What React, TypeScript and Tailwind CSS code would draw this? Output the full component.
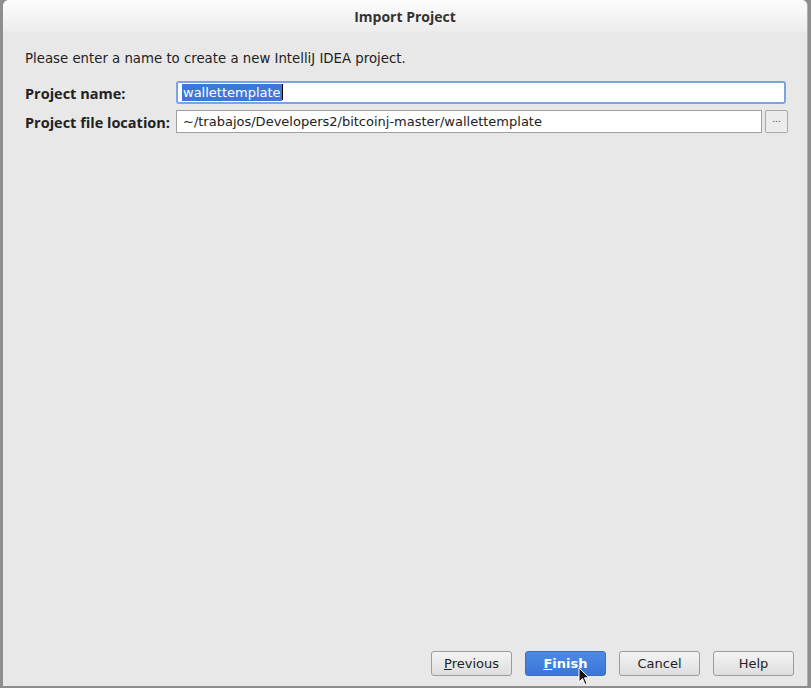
import React from "react";

const font = { fontFamily: '"DejaVu Sans", "Open Sans", sans-serif' };
const bold = { fontFamily: '"Open Sans", "DejaVu Sans", sans-serif' };

const Btn = ({
  children,
  primary,
}: {
  children: React.ReactNode;
  primary?: boolean;
}) => (
  <div
    className={
      primary
        ? "relative w-[81px] h-[25px] rounded-[3px] border border-[#3a6fc0] bg-gradient-to-b from-[#4d8ae6] to-[#3b76d6] text-white font-bold text-[13px] flex items-center justify-center"
        : "relative w-[81px] h-[25px] rounded-[3px] border border-[#9c9c9c] bg-gradient-to-b from-[#f4f4f4] to-[#dedede] text-[#222] text-[13px] flex items-center justify-center"
    }
  >
    {children}
  </div>
);

export default function App() {
  return (
    <div className="w-[811px] h-[688px] bg-[#8e8e8e] flex" style={font}>
      <div className="ml-[3px] w-[805px] h-[686px] bg-[#e8e8e8] rounded-t-[6px] flex flex-col overflow-hidden border-r border-[#b0b0b0]">
        <div
          className="h-[32px] bg-gradient-to-b from-[#fdfdfd] to-[#ececec] flex items-center justify-center text-[14px] font-bold text-[#333]"
          style={bold}
        >
          Import Project
        </div>
        <div className="flex-1 flex flex-col pl-[22px] pr-[13px]">
          <p className="mt-[17px] text-[13.3px] text-[#222]">
            Please enter a name to create a new IntelliJ IDEA project.
          </p>
          <div className="mt-[12px] flex items-center">
            <span
              className="w-[151px] pt-[3px] leading-[20px] text-[14.5px] font-bold text-[#222]"
              style={bold}
            >
              Project name:
            </span>
            <div className="w-[610px] h-[23px] bg-white border-2 border-[#7aa3e0] rounded-[3px] flex items-center px-[4px] text-[13px]">
              <span className="bg-[#3d78d6] text-white leading-[17px] px-[1px]">
                wallettemplate
              </span>
              <span className="w-px h-[16px] bg-black" />
            </div>
          </div>
          <div className="mt-[6px] flex items-center">
            <span
              className="w-[151px] pt-[3px] leading-[20px] text-[14.5px] font-bold text-[#222]"
              style={bold}
            >
              Project file location:
            </span>
            <div className="w-[586px] h-[23px] bg-white border border-[#a0a0a0] flex items-center px-[6px] text-[13px] text-[#222]">
              ~/trabajos/Developers2/bitcoinj-master/wallettemplate
            </div>
            <div className="ml-[3px] w-[23px] h-[23px] border border-[#a8a8a8] rounded-[2px] bg-[#ececec] flex items-center justify-center text-[9px] text-[#333] pb-[4px]">
              ...
            </div>
          </div>
          <div className="flex-1" />
          <div className="flex justify-end gap-[13px] mb-[10px]">
            <Btn>
              <span className="underline">P</span>revious
            </Btn>
            <Btn primary>
              <span className="underline">F</span>inish
              <svg
                className="absolute left-[52px] top-[15px]"
                width="12"
                height="19"
                viewBox="0 0 12 19"
              >
                <path
                  d="M1 1 L1 15 L4.5 11.5 L7 17.5 L9 16.5 L6.5 10.8 L11 10.8 Z"
                  fill="#111"
                  stroke="#fff"
                  strokeWidth="1"
                />
              </svg>
            </Btn>
            <Btn>Cancel</Btn>
            <Btn>Help</Btn>
          </div>
        </div>
      </div>
    </div>
  );
}
